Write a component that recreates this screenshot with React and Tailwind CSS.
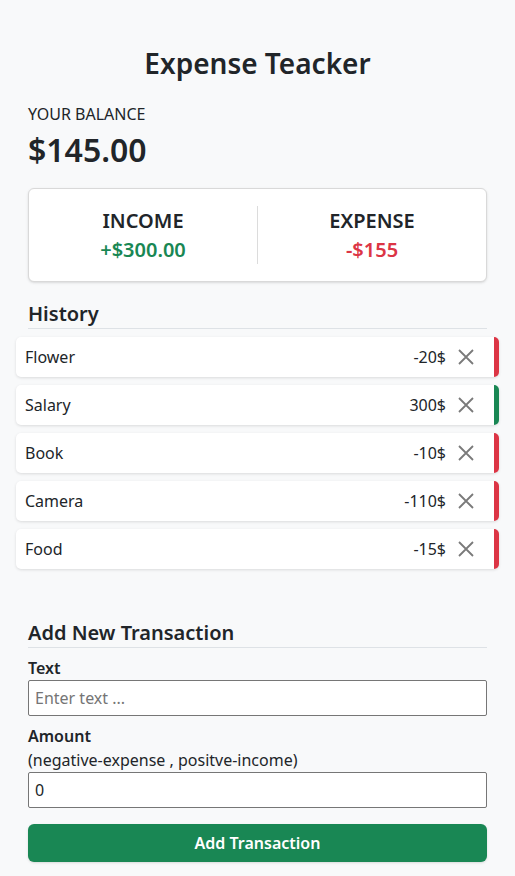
import React from "react";

const items = [
  { text: "Flower", amount: "-20$", neg: true },
  { text: "Salary", amount: "300$", neg: false },
  { text: "Book", amount: "-10$", neg: true },
  { text: "Camera", amount: "-110$", neg: true },
  { text: "Food", amount: "-15$", neg: true },
];

function XIcon() {
  return (
    <svg width="16" height="16" viewBox="0 0 16 16" fill="none" stroke="#7a7a7a" strokeWidth="1.8">
      <path d="M1 1 L15 15 M15 1 L1 15" />
    </svg>
  );
}

export default function App() {
  return (
    <div className="min-h-[876px] bg-[#f8f9fa] text-[#212529]" style={{ fontFamily: '"Noto Sans", sans-serif' }}>
      <div className="w-[459px] mx-auto pt-[43px]">
        <h1 className="text-[28px] font-semibold text-center leading-[40px]">Expense Teacker</h1>
        <div className="mt-[19px] text-[16px] leading-[24px] uppercase">Your Balance</div>
        <div className="text-[32px] font-semibold leading-[40px] mt-[4px]">$145.00</div>

        <div className="mt-[18px] bg-white border border-[#d9d9d9] rounded-[6px] shadow-sm flex py-[17px]">
          <div className="flex-1 flex flex-col items-center border-r border-[#dcdcdc]">
            <div className="text-[20px] font-semibold leading-[30px]">INCOME</div>
            <div className="text-[20px] font-semibold leading-[28px] text-[#198754]">+$300.00</div>
          </div>
          <div className="flex-1 flex flex-col items-center">
            <div className="text-[20px] font-semibold leading-[30px]">EXPENSE</div>
            <div className="text-[20px] font-semibold leading-[28px] text-[#dc3545]">-$155</div>
          </div>
        </div>

        <h3 className="mt-[20px] text-[20px] font-semibold leading-[24px] pb-[2px] border-b border-[#dee2e6]">History</h3>
        <ul className="-mx-3 mt-[8px] flex flex-col gap-[8px]">
          {items.map((it) => (
            <li
              key={it.text}
              className={`h-[40px] bg-white rounded-[5px] shadow-[0_1px_3px_rgba(0,0,0,0.12)] flex items-center pl-[9px] pr-[20px] border-r-[5px] ${it.neg ? "border-[#dc3545]" : "border-[#198754]"}`}
            >
              <span className="flex-1 text-[16px]">{it.text}</span>
              <span className="text-[16px]">{it.amount}</span>
              <span className="ml-[12px] flex items-center"><XIcon /></span>
            </li>
          ))}
        </ul>

        <h3 className="mt-[52px] text-[20px] font-semibold leading-[24px] pb-[2px] border-b border-[#dee2e6]">Add New Transaction</h3>
        <div className="mt-[8px]">
          <label className="block text-[16px] font-semibold leading-[24px]">Text</label>
          <input
            type="text"
            placeholder="Enter text ..."
            className="block w-full h-[36px] border border-[#767676] rounded-[2px] bg-white px-[6px] text-[16px] placeholder:text-[#757575] outline-none"
          />
        </div>
        <div className="mt-[8px]">
          <label className="block text-[16px] font-semibold leading-[24px]">Amount</label>
          <div className="text-[16px] leading-[24px]">(negative-expense , positve-income)</div>
          <input
            type="number"
            defaultValue="0"
            className="block w-full h-[36px] border border-[#767676] rounded-[2px] bg-white px-[6px] text-[16px] outline-none"
          />
        </div>
        <button className="mt-[16px] w-full h-[38px] rounded-[6px] bg-[#198754] text-white text-[16px] font-semibold shadow-sm">
          Add Transaction
        </button>
      </div>
    </div>
  );
}
